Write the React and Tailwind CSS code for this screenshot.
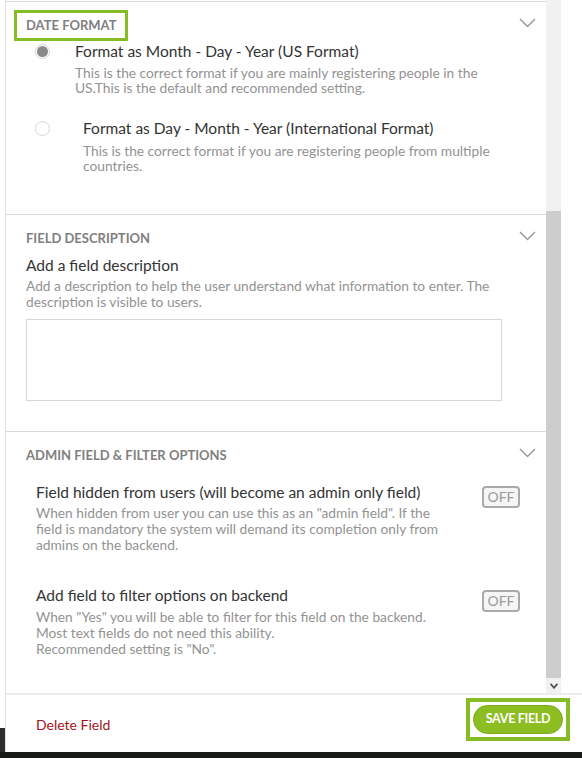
import React from 'react';

const font = { fontFamily: 'Lato, "Open Sans", Arial, sans-serif' };

function Chevron() {
  return (
    <svg width="17" height="10" viewBox="0 0 17 10" className="shrink-0">
      <path d="M1 1 L8.5 8.5 L16 1" fill="none" stroke="#9a9a9a" strokeWidth="1.5" />
    </svg>
  );
}

function Toggle() {
  return (
    <div className="w-[38px] h-[22px] rounded-[4px] border-2 border-[#aaa] bg-[#f5f5f5] flex items-center justify-center text-[14px] text-[#9a9a9a] leading-none shrink-0">
      OFF
    </div>
  );
}

function Radio({ checked }) {
  return (
    <div className="w-[15px] h-[15px] rounded-full border border-[#d6d6d6] bg-white flex items-center justify-center shrink-0">
      {checked && <div className="w-[11px] h-[11px] rounded-full bg-[#8a8a8a]" />}
    </div>
  );
}

export default function App() {
  return (
    <div className="w-[582px] h-[758px] bg-white flex flex-col overflow-hidden" style={font}>
      <div className="flex h-[752px]">
        {/* left gutter */}
        <div className="w-[5px] flex flex-col">
          <div className="flex-1 bg-white" />
          <div className="h-[24px] bg-[#2d2d2d]" />
        </div>

        <div className="flex-1 flex flex-col border-l border-[#e2e2e2]">
          {/* scroll area */}
          <div className="h-[693px] flex">
            <div className="flex-1 pt-px flex flex-col">
              <div className="flex-1 border-t border-[#d9d9d9] flex flex-col">
                {/* Date format */}
                <div className="h-[213px] border-b border-[#d9d9d9] px-[20px] pt-[8px]">
                  <div className="flex justify-between items-start">
                    <div className="-ml-[12px] border-[3px] border-[#86bc25] px-[9px] py-[4px] text-[13px] leading-[17px] font-bold text-[#808080] uppercase">
                      Date Format
                    </div>
                    <div className="mt-[8px] mr-[-10px]"><Chevron /></div>
                  </div>
                  <div className="flex">
                    <div className="ml-[9px] mt-[3px]"><Radio checked /></div>
                    <div className="ml-[25px]">
                      <div className="text-[15.5px] leading-[20px] text-[#333]">Format as Month - Day - Year (US Format)</div>
                      <div className="text-[13.75px] leading-[15px] text-[#939393] mt-[4px]">
                        This is the correct format if you are mainly registering people in the<br />
                        US.This is the default and recommended setting.
                      </div>
                    </div>
                  </div>
                  <div className="flex mt-[23px]">
                    <div className="ml-[9px] mt-[3px]"><Radio /></div>
                    <div className="ml-[33px]">
                      <div className="text-[15.5px] leading-[20px] text-[#333]">Format as Day - Month - Year (International Format)</div>
                      <div className="text-[13.75px] leading-[15px] text-[#939393] mt-[5px]">
                        This is the correct format if you are registering people from multiple<br />
                        countries.
                      </div>
                    </div>
                  </div>
                </div>

                {/* Field description */}
                <div className="h-[217px] border-b border-[#d9d9d9] px-[20px] pt-[15px]">
                  <div className="flex justify-between items-start">
                    <div className="text-[13px] leading-[17px] font-bold text-[#808080] uppercase">Field Description</div>
                    <div className="mt-[1px] mr-[-10px]"><Chevron /></div>
                  </div>
                  <div className="text-[15.5px] leading-[20px] text-[#333] mt-[8px]">Add a field description</div>
                  <div className="text-[13.75px] leading-[16px] text-[#939393] mt-[3px]">
                    Add a description to help the user understand what information to enter. The<br />
                    description is visible to users.
                  </div>
                  <div className="w-[476px] h-[82px] border border-[#d6d6d6] mt-[9px]" />
                </div>

                {/* Admin options */}
                <div className="flex-1 px-[20px] pt-[15px]">
                  <div className="flex justify-between items-start">
                    <div className="text-[13px] leading-[17px] font-bold text-[#808080] uppercase">Admin Field &amp; Filter Options</div>
                    <div className="mt-[1px] mr-[-10px]"><Chevron /></div>
                  </div>
                  <div className="flex justify-between items-start ml-[10px] mr-[6px] mt-[18px]">
                    <div>
                      <div className="text-[15.5px] leading-[20px] text-[#333]">Field hidden from users (will become an admin only field)</div>
                      <div className="text-[13.75px] leading-[16px] text-[#939393] mt-[3px]">
                        When hidden from user you can use this as an "admin field". If the<br />
                        field is mandatory the system will demand its completion only from<br />
                        admins on the backend.
                      </div>
                    </div>
                    <div className="mt-[4px]"><Toggle /></div>
                  </div>
                  <div className="flex justify-between items-start ml-[10px] mr-[6px] mt-[32px]">
                    <div>
                      <div className="text-[15.5px] leading-[20px] text-[#333]">Add field to filter options on backend</div>
                      <div className="text-[13.75px] leading-[16px] text-[#939393] mt-[4px]">
                        When "Yes" you will be able to filter for this field on the backend.<br />
                        Most text fields do not need this ability.<br />
                        Recommended setting is "No".
                      </div>
                    </div>
                    <div className="mt-[5px]"><Toggle /></div>
                  </div>
                </div>
              </div>
            </div>

            {/* scrollbar */}
            <div className="w-[15px] bg-[#f1f1f1] flex flex-col">
              <div className="h-[211px]" />
              <div className="flex-1 bg-[#cdcdcd]" />
              <div className="h-[15px] flex items-center justify-center">
                <svg width="8" height="6" viewBox="0 0 8 6">
                  <path d="M0.5 0.8 L4 4.8 L7.5 0.8" fill="none" stroke="#505050" strokeWidth="1.8" />
                </svg>
              </div>
            </div>
            <div className="w-[21px] bg-white" />
          </div>

          {/* footer */}
          <div className="flex-1 border-t-2 border-[#ececec] flex items-start justify-between pl-[30px] pr-[12px]">
            <div className="text-[14px] leading-[18px] text-[#a3141c] mt-[21px]">Delete Field</div>
            <div className="mt-[3px] border-[4px] border-[#86bc25] p-[3px]">
              <div className="w-[90px] h-[29px] rounded-full bg-[#8cbd21] border border-[#7eab1c] flex items-center justify-center text-white text-[12.5px] font-bold uppercase tracking-[-0.3px]">
                Save Field
              </div>
            </div>
          </div>
        </div>
      </div>
      <div className="flex-1 bg-[#161a14]" />
    </div>
  );
}
